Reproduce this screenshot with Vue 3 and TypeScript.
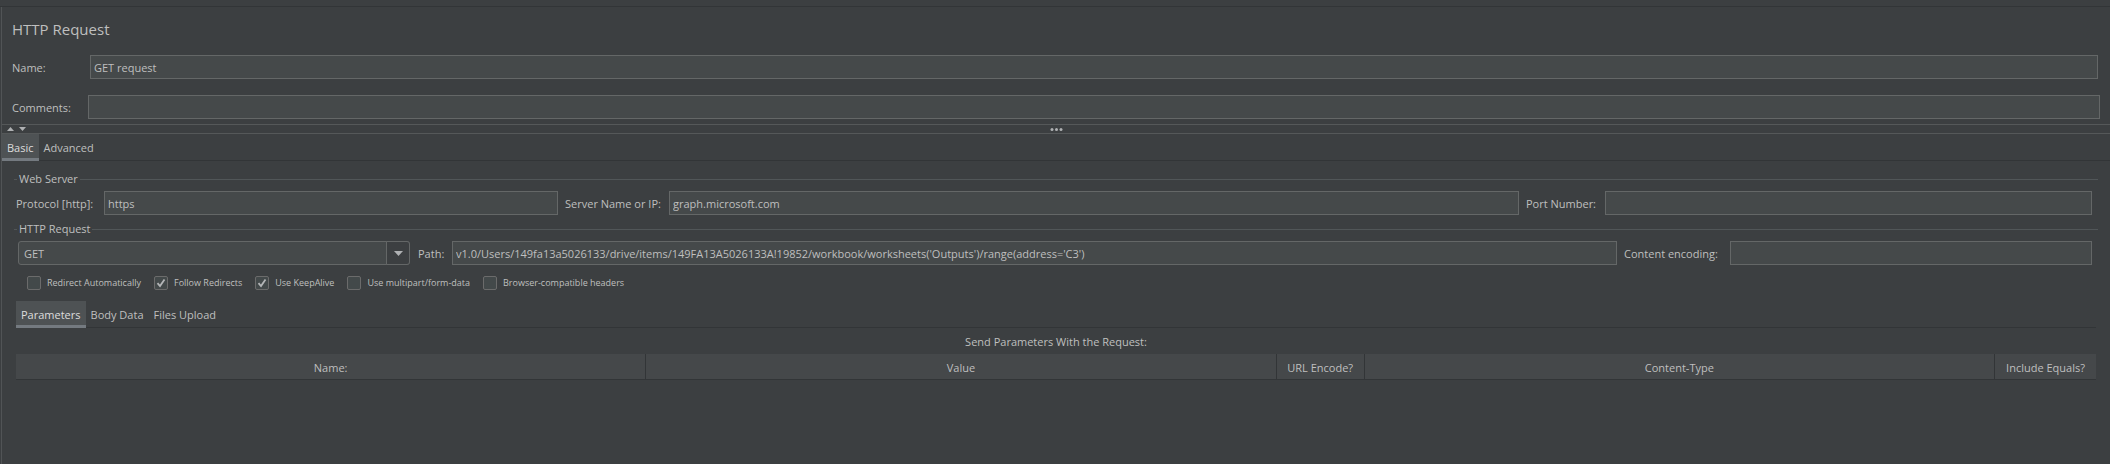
<script setup lang="ts">
import { ref } from 'vue'

interface Option {
  id: string
  label: string
  checked: boolean
}

const name = ref('GET request')
const comments = ref('')
const protocol = ref('https')
const server = ref('graph.microsoft.com')
const port = ref('')
const method = ref('GET')
const path = ref("v1.0/Users/149fa13a5026133/drive/items/149FA13A5026133A!19852/workbook/worksheets('Outputs')/range(address='C3')")
const encoding = ref('')

const mainTabs = ['Basic', 'Advanced']
const mainTab = ref('Basic')
const bodyTabs = ['Parameters', 'Body Data', 'Files Upload']
const bodyTab = ref('Parameters')

const options = ref<Option[]>([
  { id: 'redirect', label: 'Redirect Automatically', checked: false },
  { id: 'follow', label: 'Follow Redirects', checked: true },
  { id: 'keepalive', label: 'Use KeepAlive', checked: true },
  { id: 'multipart', label: 'Use multipart/form-data', checked: false },
  { id: 'browser', label: 'Browser-compatible headers', checked: false },
])
</script>

<template>
  <main class="window">
    <div class="top-strip"></div>
    <div class="panel">
      <header class="head">
        <h1>HTTP Request</h1>
        <div class="row name-row">
          <label for="name">Name:</label>
          <input id="name" v-model="name" type="text" />
        </div>
        <div class="row comments-row">
          <label for="comments">Comments:</label>
          <input id="comments" v-model="comments" type="text" />
        </div>
      </header>

      <div class="divider">
        <div class="arrows">
          <button type="button" aria-label="Collapse">
            <svg width="7" height="4" viewBox="0 0 7 4"><path d="M3.5 0 7 4H0z" fill="#afb1b3" /></svg>
          </button>
          <button type="button" aria-label="Expand">
            <svg width="7" height="4" viewBox="0 0 7 4"><path d="M0 0h7L3.5 4z" fill="#afb1b3" /></svg>
          </button>
        </div>
        <svg class="grip" width="13" height="3" viewBox="0 0 13 3" fill="#afb1b3">
          <circle cx="2" cy="1.5" r="1.5" /><circle cx="6.5" cy="1.5" r="1.5" /><circle cx="11" cy="1.5" r="1.5" />
        </svg>
      </div>

      <nav class="tabs" role="tablist">
        <button v-for="t in mainTabs" :key="t" type="button" role="tab" :aria-selected="t === mainTab" :class="{ active: t === mainTab }" @click="mainTab = t">{{ t }}</button>
      </nav>

      <div class="body">
        <fieldset class="server">
          <legend>Web Server</legend>
          <div class="row">
            <label for="protocol" class="protocol-label">Protocol [http]:</label>
            <input id="protocol" v-model="protocol" class="protocol" type="text" />
            <label for="server" class="server-label">Server Name or IP:</label>
            <input id="server" v-model="server" class="host" type="text" />
            <label for="port" class="port-label">Port Number:</label>
            <input id="port" v-model="port" class="port" type="text" />
          </div>
        </fieldset>

        <fieldset class="request">
          <legend>HTTP Request</legend>
          <div class="row">
            <div class="combo">
              <select v-model="method" aria-label="Method">
                <option>GET</option>
                <option>POST</option>
                <option>PUT</option>
                <option>DELETE</option>
              </select>
              <span class="combo-arrow">
                <svg width="9" height="5" viewBox="0 0 9 5"><path d="M0 0h9L4.5 5z" fill="#afb1b3" /></svg>
              </span>
            </div>
            <label for="path" class="path-label">Path:</label>
            <input id="path" v-model="path" class="path" type="text" />
            <label for="encoding" class="encoding-label">Content encoding:</label>
            <input id="encoding" v-model="encoding" class="encoding" type="text" />
          </div>
          <div class="options">
            <label v-for="o in options" :key="o.id" class="option">
              <span class="box">
                <input v-model="o.checked" type="checkbox" />
                <svg v-if="o.checked" width="14" height="14" viewBox="0 0 14 14"><path d="M3.5 7.2 6 10 10.5 3.6" fill="none" stroke="#b4b6b8" stroke-width="1.8" /></svg>
              </span>
              {{ o.label }}
            </label>
          </div>
        </fieldset>

        <nav class="tabs sub-tabs" role="tablist">
          <button v-for="t in bodyTabs" :key="t" type="button" role="tab" :aria-selected="t === bodyTab" :class="{ active: t === bodyTab }" @click="bodyTab = t">{{ t }}</button>
        </nav>

        <table>
          <caption>Send Parameters With the Request:</caption>
          <colgroup>
            <col /><col /><col class="url-col" /><col /><col class="equals-col" />
          </colgroup>
          <thead>
            <tr>
              <th scope="col">Name:</th>
              <th scope="col">Value</th>
              <th scope="col">URL Encode?</th>
              <th scope="col">Content-Type</th>
              <th scope="col">Include Equals?</th>
            </tr>
          </thead>
        </table>
      </div>
    </div>
  </main>
</template>

<style>
body {
  background: #3c3f41;
}
</style>

<style scoped>
.window {
  display: flex;
  flex-direction: column;
  min-height: 100vh;
  background: #3c3f41;
  color: #bfbfbf;
  font: 11px/16px "Open Sans", "Noto Sans", sans-serif;
}
.window *,
.window {
  box-sizing: border-box;
}
.top-strip {
  height: 7px;
  border-bottom: 1px solid #323537;
}
.panel {
  flex: 1;
  margin-left: 1px;
  border-left: 1px solid #515456;
}
.head {
  padding: 12px 10px 5px;
}
h1 {
  margin: 0 0 16px;
  font-size: 15px;
  font-weight: 400;
  line-height: 20px;
}
.row {
  display: flex;
  align-items: center;
}
.name-row {
  margin-bottom: 16px;
  padding-right: 2px;
}
.name-row label {
  width: 78px;
}
.comments-row label {
  width: 76px;
}
.head input {
  flex: 1;
}
input,
select,
button {
  margin: 0;
  color: inherit;
  font: inherit;
}
input[type="text"] {
  height: 24px;
  min-width: 0;
  padding: 1px 3px 0;
  border: 1px solid #646767;
  border-radius: 0;
  background: #45494a;
  outline: none;
}
label {
  flex: none;
  white-space: nowrap;
}
.row label {
  padding-top: 2px;
}
.divider {
  display: grid;
  grid-template-columns: 1fr auto 1fr;
  align-items: center;
  height: 10px;
  border: solid #555859;
  border-width: 1px 0;
}
.arrows {
  display: flex;
  gap: 5px;
  padding-left: 5px;
}
.arrows button {
  display: flex;
  padding: 0;
  border: 0;
  background: none;
}
.tabs {
  display: flex;
  height: 27px;
  background: linear-gradient(#323537, #323537) bottom / 100% 1px no-repeat;
}
.tabs button {
  padding: 0 5px;
  border: 0;
  background: none;
  white-space: nowrap;
}
.tabs .active {
  border: solid #4e5254;
  border-width: 3px 0;
  border-bottom-color: #747a80;
  background: #4e5254;
  color: #dddddd;
}
.body {
  padding: 10px 14px 0;
}
fieldset {
  min-width: 0;
  margin: 0 -2px;
  padding: 4px 6px 0 4px;
  border: 0 solid #515658;
  border-top-width: 1px;
}
.server {
  padding-left: 2px;
  padding-bottom: 6px;
}
legend {
  margin-left: 1px;
  padding: 0 2px;
}
.request legend {
  margin-left: -1px;
}
.protocol-label {
  width: 88px;
}
.server-label {
  width: 111px;
  padding-left: 7px;
}
.port-label {
  width: 86px;
  padding-left: 7px;
}
.path-label {
  width: 42px;
  padding-left: 8px;
}
.encoding-label {
  width: 113px;
  padding-left: 7px;
}
.protocol {
  flex: 454 1 454px;
}
.host {
  flex: 850 1 850px;
}
.port {
  flex: 487 1 487px;
}
.combo {
  display: grid;
  flex: 392 1 392px;
  height: 24px;
}
.combo select {
  grid-area: 1 / 1;
  width: 100%;
  height: 24px;
  padding: 1px 5px 0;
  border: 1px solid #646767;
  border-radius: 3px;
  background: #45494a;
  appearance: none;
}
.combo-arrow {
  display: grid;
  grid-area: 1 / 1;
  place-items: center;
  justify-self: end;
  width: 24px;
  height: 24px;
  border: 1px solid #646767;
  border-radius: 0 3px 3px 0;
  background: #3c3f41;
  pointer-events: none;
}
.path {
  flex: 1165 1 1165px;
}
.encoding {
  flex: 362 1 362px;
}
.options {
  display: flex;
  gap: 13px;
  padding: 11px 9px 0;
}
.option {
  display: flex;
  align-items: center;
  gap: 6px;
  height: 14px;
  font-size: 9px;
  line-height: 14px;
}
.box {
  display: grid;
  width: 14px;
  height: 14px;
}
.box > * {
  grid-area: 1 / 1;
}
.box input {
  width: 14px;
  height: 14px;
  border: 1px solid #6b6b6b;
  border-radius: 2px;
  background: #43494a;
  appearance: none;
}
.box svg {
  pointer-events: none;
}
.sub-tabs {
  margin-top: 11px;
}
table {
  width: 100%;
  border-collapse: separate;
  border-spacing: 0;
  table-layout: fixed;
}
caption {
  height: 26px;
  padding-top: 6px;
}
.url-col {
  width: 88px;
}
.equals-col {
  width: 101px;
}
th {
  height: 26px;
  padding: 2px 0 0;
  border: 0 solid #323537;
  border-width: 0 1px 1px 0;
  background: #45484a;
  font-weight: 400;
}
th:last-child {
  border-right: 0;
}
</style>
